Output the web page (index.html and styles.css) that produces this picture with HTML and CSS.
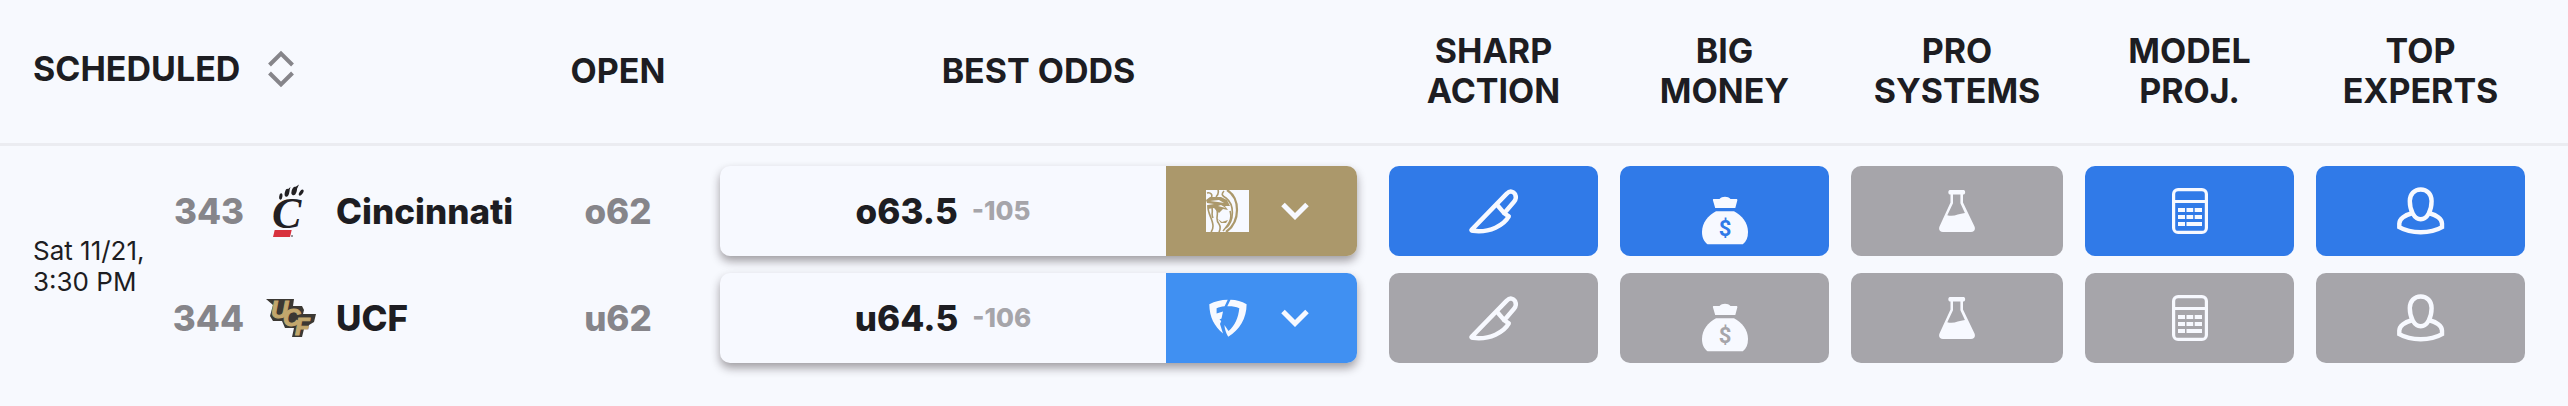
FILE: index.html
```html
<!DOCTYPE html>
<html lang="en">
<head>
  <meta charset="UTF-8" />
  <meta name="viewport" content="width=device-width, initial-scale=1.0" />
  <title>Best Odds</title>
  <link rel="stylesheet" href="styles.css">
</head>
<body>
  <!-- shared icons -->
  <svg class="sprite" aria-hidden="true">
    <symbol id="i-chevron" viewBox="0 0 28 18">
      <path d="M2 2.5 14 14.5 26 2.5" fill="none" stroke="currentColor" stroke-width="5" />
    </symbol>
    <symbol id="i-knife" viewBox="0 0 52 48">
      <g fill="none" stroke="currentColor" stroke-width="4.4" stroke-linejoin="round">
        <path d="M3.8 42.6 39 6.4C41.600 3.600 45.400 4 47.200 7.400C48.600 10.200 47.800 12.600 46 14.800L36.200 26.200 40.800 29.400C36 38 22 46 5 43.800C3.600 43.600 3.200 43.200 3.800 42.600Z" />
        <path d="M29 17.800 36.600 26.600" />
      </g>
    </symbol>
    <symbol id="i-money" viewBox="0 0 48 68">
      <path d="M13 22H18.500C21 19 27 19 29.500 22H35C36.300 22 36.600 22.600 36.300 23.600L34.300 31H14.200L12 23.600C11.700 22.600 11.900 22 13 22Z" fill="currentColor" />
      <path d="M15 34.300H33C41 38.600 47 46 47 55C47 60.500 45.300 64.800 41.800 67.300H6.500C3 64.800 1 60.500 1 55C1 46 7 38.600 15 34.300Z" fill="currentColor" />
      <text class="dollar" x="24" y="59" text-anchor="middle">$</text>
    </symbol>
    <symbol id="i-flask" viewBox="0 0 36 42">
      <path fill="currentColor" fill-rule="evenodd" d="M10.800 0H24.700C26.600 0 26.700 4.200 24.700 4.600H24V12.600L35.500 36.500C36.700 39.600 35.200 42 32 42H4C.8 42-.7 39.600.5 36.500L11.500 12.600V4.600H10.800C8.800 4.200 8.900 0 10.800 0ZM14 4.600V13.200L8.300 25.200C15 27 19 23.800 25.900 23L21.400 13.200V4.600Z" />
    </symbol>
    <symbol id="i-calc" viewBox="0 0 36 46">
      <rect x="1.600" y="1.600" width="32.800" height="42.800" rx="4.500" fill="none" stroke="currentColor" stroke-width="3.200" />
      <path fill="currentColor" d="M2 12H34V15H2ZM6 20H13V24H6ZM14.500 20H21.200V24H14.500ZM22.700 20H30V24H22.700ZM6 27H13V31H6ZM14.500 27H21.200V31H14.500ZM22.700 27H30V31H22.700ZM6 34H13V38H6ZM14.500 34H30V38H14.500Z" />
    </symbol>
    <symbol id="i-expert" viewBox="0 0 48 48">
      <g fill="none" stroke="currentColor" stroke-width="4.400">
        <path d="M23.700 2.500C30 2.500 34.600 7 34.600 14C34.600 23 30.500 32.200 23.700 32.200C17 32.200 12.800 23 12.800 14C12.800 7 17.500 2.500 23.700 2.500Z" />
        <path d="M15.600 26C8 28 2.300 32 2.300 36.500V40.200C8 43.600 15 45.300 23.700 45.300C32.400 45.300 39.400 43.600 45 40.200V36.500C45 32 39.400 28 31.800 26" />
      </g>
    </symbol>
  </svg>

  <table class="odds-table">
    <colgroup>
      <col class="col-date">
      <col class="col-team">
      <col class="col-open">
      <col>
      <col class="col-tool">
      <col class="col-tool">
      <col class="col-systems">
      <col class="col-tool">
      <col class="col-last">
    </colgroup>
    <thead>
      <tr>
        <th class="scheduled" colspan="2">
          <button class="sort-btn">SCHEDULED
            <svg width="26" height="38" viewBox="0 0 26 38" fill="none" stroke="#86858a" stroke-width="4" aria-hidden="true">
              <path d="M1.500 15 13 3.500 24.500 15M1.500 23 13 34.500 24.500 23" />
            </svg>
          </button>
        </th>
        <th>OPEN</th>
        <th>BEST ODDS</th>
        <th>SHARP<br>ACTION</th>
        <th>BIG<br>MONEY</th>
        <th>PRO<br>SYSTEMS</th>
        <th>MODEL<br>PROJ.</th>
        <th>TOP<br>EXPERTS</th>
      </tr>
    </thead>
    <tbody>
      <tr>
        <td class="date">Sat 11/21,<br>3:30 PM</td>
        <td>
          <div class="stack">
            <div class="team">
              <span class="rot">343</span>
              <svg class="logo" width="50" height="56" viewBox="-7 0 50 56" aria-hidden="true">
                <text class="uc-c" x="-1" y="45">C</text>
                <g fill="#222023">
                  <ellipse cx="7.800" cy="13.500" rx="1.600" ry="3.200" transform="rotate(8 7.800 13.500)" />
                  <ellipse cx="14" cy="9.800" rx="2.200" ry="4" transform="rotate(14 14 9.800)" />
                  <ellipse cx="21.200" cy="8" rx="2.500" ry="4.400" transform="rotate(18 21.200 8)" />
                  <ellipse cx="28.200" cy="9.600" rx="1.700" ry="3.400" transform="rotate(34 28.200 9.600)" />
                  <path d="M14 7 17.500 4 16 9ZM21 5 26 1.500 23.500 7Z" />
                </g>
                <path d="M1.700 47H18.700L17 54H0Z" fill="#d8323e" />
                <circle cx="19" cy="53" r="1" fill="#77767b" />
              </svg>
              <span class="name">Cincinnati</span>
            </div>
            <div class="team">
              <span class="rot">344</span>
              <svg class="logo" width="50" height="56" viewBox="0 -8 50 56" aria-hidden="true">
                <path d="M0 1H28L27 8H36L38 12 37 16H50L48 24 43 27 42 31H38L36 39H26L28 30H19L16 23H7L4 18 7 7Z" fill="#3b3833" />
                <text class="ucf" x="5 17 29" y="20 28 37">UCF</text>
              </svg>
              <span class="name">UCF</span>
            </div>
          </div>
        </td>
        <td>
          <div class="stack">
            <span class="open">o62</span>
            <span class="open">u62</span>
          </div>
        </td>
        <td class="best">
          <div class="stack">
            <div class="odds">
              <span class="line">o63.5 <small>-105</small></span>
              <button class="book mgm" aria-label="BetMGM">
                <svg width="43" height="42" viewBox="0 0 43 42" aria-hidden="true">
                  <path d="M0 0H43V42H0Z" fill="#f7f9ff" />
                  <g fill="none" stroke="#ab986b" stroke-width="1.600">
                    <path d="M21 0C34 8 35 31 20 42" stroke-width="2.200" />
                    <path d="M12 0C13 3 12 5 10 7M18 1C15 4 16 6 20 8C29 15 28 31 20 38" />
                    <path d="M1 3C5 2 7 5 5 8M10 18C14 24 8 29 13 34C15 37 14 40 13 42M2 15C1 23 7 29 7 36C7 39 6 41 5 42M6 18C7 23 5 24 7 28M24 21C27 29 22 35 17 41" />
                  </g>
                  <path d="M0 10 4 7 15 7 21 10 24 16 19 16 22 20 17 19 13 23 8 18 2 19 2 15 8 14 1 13ZM12 29 16 32 22 30 20 33 15 33Z" fill="#ab986b" />
                  <path d="M4 11 12 12 18 13 13 10ZM12 16 20 18 15 15Z" fill="#f7f9ff" />
                </svg>
                <svg width="28" height="18"><use href="#i-chevron" /></svg>
              </button>
            </div>
            <div class="odds">
              <span class="line">u64.5 <small>-106</small></span>
              <button class="book fanduel" aria-label="FanDuel">
                <svg width="43" height="42" viewBox="-3 -2 43 42" aria-hidden="true">
                  <g fill="currentColor">
                    <path d="M.3 5.300C6 2.200 12 .8 18.700.7L15.600 7.200C12.500 7.400 10 8 7.600 9.200V14.400L14 12.500 12.500 19.500 10.500 20.500 12.200 22 11 25 14 34.500C5.500 27.500.5 18.500.3 5.300Z" />
                    <path d="M21.500.7C27.500.8 32.500 2.200 37.600 5.300C37.600 19.500 30.500 31 19.200 37.700C16.800 33.600 15.700 30 15.400 26L19.500 32C26 26.500 29.300 19 30.300 9.200C26.500 7.500 22.600 7 18.300 7.200Z" />
                  </g>
                </svg>
                <svg width="28" height="18"><use href="#i-chevron" /></svg>
              </button>
            </div>
          </div>
        </td>
        <td class="tool">
          <div class="stack">
            <button class="signal on" aria-label="Sharp action, over"><svg width="52" height="48"><use href="#i-knife" /></svg></button>
            <button class="signal" aria-label="Sharp action, under"><svg width="52" height="48"><use href="#i-knife" /></svg></button>
          </div>
        </td>
        <td class="tool">
          <div class="stack">
            <button class="signal on" aria-label="Big money, over"><svg width="48" height="68"><use href="#i-money" /></svg></button>
            <button class="signal" aria-label="Big money, under"><svg width="48" height="68"><use href="#i-money" /></svg></button>
          </div>
        </td>
        <td class="tool">
          <div class="stack">
            <button class="signal" aria-label="Pro systems, over"><svg width="36" height="42"><use href="#i-flask" /></svg></button>
            <button class="signal" aria-label="Pro systems, under"><svg width="36" height="42"><use href="#i-flask" /></svg></button>
          </div>
        </td>
        <td class="tool">
          <div class="stack">
            <button class="signal on" aria-label="Model projection, over"><svg width="36" height="46"><use href="#i-calc" /></svg></button>
            <button class="signal" aria-label="Model projection, under"><svg width="36" height="46"><use href="#i-calc" /></svg></button>
          </div>
        </td>
        <td class="tool">
          <div class="stack">
            <button class="signal on" aria-label="Top experts, over"><svg width="48" height="48"><use href="#i-expert" /></svg></button>
            <button class="signal" aria-label="Top experts, under"><svg width="48" height="48"><use href="#i-expert" /></svg></button>
          </div>
        </td>
      </tr>
    </tbody>
  </table>
</body>
</html>
```
FILE: styles.css
```css
:root {
  --bg-color: #f7f9fe;
  --text-color: #1d1d22;
  --muted: #86858a;
  --off: #a6a5aa;
  --on: #307ae8;
}
* {
  box-sizing: border-box;
}
body {
  margin: 0;
  font-family: Inter, Arial, sans-serif;
  font-size: 34px;
  background-color: var(--bg-color);
  color: var(--text-color);
}
button {
  border: none;
  padding: 0;
  font: inherit;
  color: inherit;
  background: none;
  cursor: pointer;
}
svg {
  display: block;
  flex: none;
}
.sprite {
  display: none;
}
.odds-table {
  width: 100%;
  table-layout: fixed;
  border-collapse: collapse;
}
.col-date {
  width: 164px;
}
.col-team {
  width: 373px;
}
.col-open {
  width: 162px;
}
.col-tool {
  width: 231px;
}
.col-systems {
  width: 234px;
}
.col-last {
  width: 263px;
}
th {
  height: 144px;
  padding: 0 11px;
  line-height: 40px;
  font-weight: 700;
  text-align: center;
  vertical-align: middle;
  border-bottom: 3px solid #ebecf1;
}
th.scheduled {
  padding: 0 0 4px 33px;
  text-align: left;
}
.sort-btn {
  display: flex;
  align-items: center;
  gap: 28px;
}
td {
  padding: 20px 0;
}
th:last-child {
  padding-right: 43px;
}
td.date {
  padding: 24px 0 20px 33px;
  font-size: 26px;
  line-height: 31px;
  white-space: nowrap;
}
td.best {
  padding: 20px 21px;
}
td.tool {
  padding: 20px 11px;
}
td.tool:last-child {
  padding-right: 43px;
}
.stack {
  display: grid;
  grid-auto-rows: 90px;
  gap: 17px;
  font-size: 35px;
}
.team {
  display: flex;
  align-items: center;
  font-weight: 800;
}
.rot {
  width: 80px;
  text-align: right;
  color: var(--muted);
}
.logo {
  margin: 0 20px 0 22px;
}
.open {
  display: flex;
  align-items: center;
  justify-content: center;
  font-weight: 800;
  color: var(--muted);
}
.odds {
  display: flex;
  border-radius: 10px;
  background-color: #f7f9ff;
  box-shadow: 0 5px 10px rgba(29, 20, 25, 0.4);
}
.line {
  flex: 1;
  display: flex;
  align-items: center;
  justify-content: center;
  gap: 14px;
  font-weight: 800;
}
.line small {
  font-size: 26px;
  color: var(--off);
}
.book {
  display: flex;
  align-items: center;
  justify-content: center;
  gap: 32px;
  width: 191px;
  padding-right: 8px;
  border-radius: 0 10px 10px 0;
  color: #f7f9ff;
}
.mgm {
  background-color: #ab986b;
}
.fanduel {
  background-color: #4090f2;
}
.signal {
  --tile: var(--off);
  display: flex;
  align-items: center;
  justify-content: center;
  border-radius: 10px;
  color: #f7f9ff;
  background-color: var(--tile);
}
.signal.on {
  --tile: var(--on);
}
.dollar {
  font-family: Roboto, sans-serif;
  font-size: 22px;
  font-weight: 700;
  fill: var(--tile);
}
.uc-c {
  font-family: "Liberation Serif", serif;
  font-size: 44px;
  font-weight: 700;
  font-style: italic;
  fill: #222023;
}
.ucf {
  font-family: "Liberation Sans", sans-serif;
  font-size: 24px;
  font-weight: 700;
  font-style: italic;
  fill: #c2a76d;
  stroke: #c2a76d;
  stroke-width: 1px;
}
```
